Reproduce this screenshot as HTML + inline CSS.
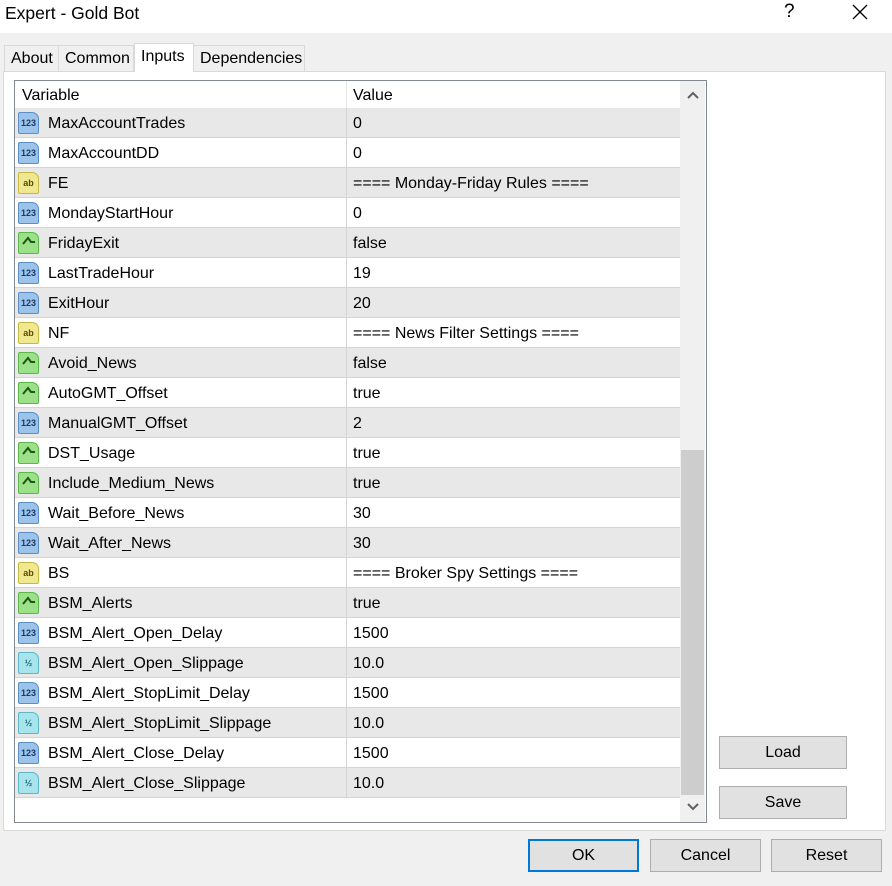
<!DOCTYPE html>
<html><head><style>
*{margin:0;padding:0;box-sizing:border-box}
body{width:892px;height:886px;background:#f0f0f0;font-family:"Liberation Sans",Arial,sans-serif;font-size:16px;color:#000;position:relative;overflow:hidden}
.title{position:absolute;left:0;top:0;width:892px;height:33px;background:#fff}
.title span{position:absolute;left:5px;top:3px;font-size:17.5px}
.tab{position:absolute;top:45px;height:27px;border:1px solid #d9d9d9;border-bottom:none;background:#f0f0f0;font-size:16px;padding:4px 0 0 6px}
.panel{position:absolute;left:3px;top:71px;width:883px;height:760px;background:#fff;border:1px solid #d9d9d9}
.list{position:absolute;left:14px;top:80px;width:693px;height:743px;border:1px solid #828790;background:#fff;overflow:hidden}
.row{position:absolute;left:0;width:665px;height:30px;border-bottom:1px solid #d4d4d4}
.row.g{background:#e8e8e8}
.row .n{position:absolute;left:33px;top:7px}
.row .v{position:absolute;left:338px;top:7px}
.row .d{position:absolute;left:331px;top:0;width:1px;height:30px;background:#d4d4d4}
.ic{position:absolute;left:3px;top:4px;width:21px;height:22px;border-radius:2px 7px 2px 2px;font-size:9px;font-weight:bold;text-align:center;line-height:21px}
.i1{background:#9cc3ea;color:#1a3a6a;border:1px solid #5a8fc8}
.i2{background:#f0e890;color:#5a4a00;border:1px solid #c8b840}
.i3{background:#9de08a;color:#1a5a10;border:1px solid #5ab848}
.i4{background:#a8e4ec;color:#1a6a7a;border:1px solid #5ab8c8}
.sb{position:absolute;left:665px;top:0;width:25px;height:741px;background:#f0f0f0}
.btn{position:absolute;height:33px;background:#e1e1e1;border:1px solid #adadad;text-align:center;font-size:16px;line-height:31px}
</style></head><body>
<div class="title"><span>Expert - Gold Bot</span><span style="left:784px;top:1px;font-size:19px">?</span>
<svg style="position:absolute;left:852px;top:4px" width="16" height="16"><path d="M1 1L15 15M15 1L1 15" stroke="#000" stroke-width="1.3"/></svg></div>
<div class="tab" style="left:4px;width:55px">About</div>
<div class="tab" style="left:58px;width:76px">Common</div>
<div class="tab" style="left:193px;width:112px">Dependencies</div>
<div class="panel"></div>
<div class="tab" style="left:134px;top:43px;width:60px;height:29px;background:#fff;border-color:#d9d9d9">Inputs</div>
<div class="list">
<div style="position:absolute;left:7px;top:6px">Variable</div><div style="position:absolute;left:338px;top:6px">Value</div>
<div style="position:absolute;left:331px;top:0;width:1px;height:27px;background:#e5e5e5"></div>
<div id="rows"></div>
<div class="sb">
<svg style="position:absolute;left:7px;top:10px" width="12" height="8"><path d="M1 7L6 2L11 7" stroke="#606060" stroke-width="2" fill="none"/></svg>
<div style="position:absolute;left:1px;top:369px;width:23px;height:345px;background:#cdcdcd"></div>
<svg style="position:absolute;left:7px;top:722px" width="12" height="8"><path d="M1 1L6 6L11 1" stroke="#606060" stroke-width="2" fill="none"/></svg>
</div>
</div>
<div class="btn" style="left:719px;top:736px;width:128px">Load</div>
<div class="btn" style="left:719px;top:786px;width:128px">Save</div>
<div class="btn" style="left:528px;top:839px;width:111px;border:2px solid #0078d7;line-height:29px">OK</div>
<div class="btn" style="left:650px;top:839px;width:111px">Cancel</div>
<div class="btn" style="left:771px;top:839px;width:111px">Reset</div>
<script>
var d=[["1","MaxAccountTrades","0"],["1","MaxAccountDD","0"],["2","FE","==== Monday-Friday Rules ===="],["1","MondayStartHour","0"],["3","FridayExit","false"],["1","LastTradeHour","19"],["1","ExitHour","20"],["2","NF","==== News Filter Settings ===="],["3","Avoid_News","false"],["3","AutoGMT_Offset","true"],["1","ManualGMT_Offset","2"],["3","DST_Usage","true"],["3","Include_Medium_News","true"],["1","Wait_Before_News","30"],["1","Wait_After_News","30"],["2","BS","==== Broker Spy Settings ===="],["3","BSM_Alerts","true"],["1","BSM_Alert_Open_Delay","1500"],["4","BSM_Alert_Open_Slippage","10.0"],["1","BSM_Alert_StopLimit_Delay","1500"],["4","BSM_Alert_StopLimit_Slippage","10.0"],["1","BSM_Alert_Close_Delay","1500"],["4","BSM_Alert_Close_Slippage","10.0"]];
var lab={"1":"123","2":"ab","3":"<svg width='16' height='12'><path d='M2 10L7 4L10 8H14' stroke='#1a5a10' stroke-width='2' fill='none'/></svg>","4":"½"};var h="";
d.forEach(function(r,i){h+='<div class="row'+(i%2==0?' g':'')+'" style="top:'+(27+i*30)+'px"><div class="ic i'+r[0]+'">'+lab[r[0]]+'</div><div class="n">'+r[1]+'</div><div class="d"></div><div class="v">'+r[2]+'</div></div>';});
document.getElementById("rows").innerHTML=h;
</script>
</body></html>
